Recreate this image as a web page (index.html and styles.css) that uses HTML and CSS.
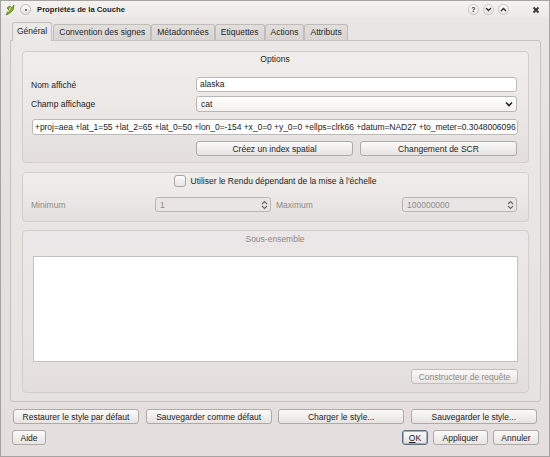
FILE: index.html
```html
<!DOCTYPE html>
<html lang="fr">
<head>
<meta charset="utf-8">
<title>Propriétés de la Couche</title>
<link rel="stylesheet" href="styles.css">
</head>
<body>
<div class="window">
  <div class="titlebar">
    <span class="appicon">
      <svg width="10" height="12" viewBox="0 0 10 12">
        <path d="M1 11 L4 6 L2 4 L5 2 L7 4 L9 1 L8 6 L5 9 Z" fill="#7cae3a" stroke="#4d7a1c" stroke-width="0.8"/>
        <path d="M3 8 L6 3" stroke="#e8d44a" stroke-width="1.2"/>
      </svg>
    </span>
    <span class="menubtn"><span class="dot"></span></span>
    <span class="title">Propriétés de la Couche</span>
    <span class="tb-right">
      <span class="tbtn">?</span>
      <span class="tbtn"><svg width="7" height="5" viewBox="0 0 7 5"><path d="M1 1 L3.5 3.5 L6 1" fill="none" stroke="#333" stroke-width="1.4"/></svg></span>
      <span class="tbtn"><svg width="7" height="5" viewBox="0 0 7 5"><path d="M1 4 L3.5 1.5 L6 4" fill="none" stroke="#333" stroke-width="1.4"/></svg></span>
      <span class="tclose"><svg width="8" height="8" viewBox="0 0 8 8"><path d="M1.5 1.5 L6.5 6.5 M6.5 1.5 L1.5 6.5" stroke="#333" stroke-width="1.8"/></svg></span>
    </span>
  </div>

  <div class="content">
    <div class="tabs">
      <span class="tab active">Général</span>
      <span class="tab">Convention des signes</span>
      <span class="tab">Métadonnées</span>
      <span class="tab">Etiquettes</span>
      <span class="tab">Actions</span>
      <span class="tab">Attributs</span>
    </div>

    <div class="panel">
      <div class="group options">
        <div class="gtitle">Options</div>
        <div class="formgrid">
          <span class="label">Nom affiché</span>
          <div class="input">alaska</div>
          <span class="label">Champ affichage</span>
          <div class="select">cat
            <svg class="chev" width="8" height="6" viewBox="0 0 8 6"><path d="M1 1.5 L4 4.5 L7 1.5" fill="none" stroke="#222" stroke-width="1.6"/></svg>
          </div>
        </div>
        <div class="input proj">+proj=aea +lat_1=55 +lat_2=65 +lat_0=50 +lon_0=-154 +x_0=0 +y_0=0 +ellps=clrk66 +datum=NAD27 +to_meter=0.3048006096</div>
        <div class="btnrow">
          <span class="btn">Créez un index spatial</span>
          <span class="btn">Changement de SCR</span>
        </div>
      </div>

      <div class="group scale">
        <div class="checkrow">
          <span class="checkbox"></span>
          <span>Utiliser le Rendu dépendant de la mise à l'échelle</span>
        </div>
        <div class="scalegrid">
          <span class="label dis">Minimum</span>
          <div class="spin">1<span class="arrows"><svg width="7" height="10" viewBox="0 0 7 10"><path d="M1 4 L3.5 1.5 L6 4 M1 6 L3.5 8.5 L6 6" fill="none" stroke="#666" stroke-width="1.1"/></svg></span></div>
          <span class="label dis maxlabel">Maximum</span>
          <div class="spin">100000000<span class="arrows"><svg width="7" height="10" viewBox="0 0 7 10"><path d="M1 4 L3.5 1.5 L6 4 M1 6 L3.5 8.5 L6 6" fill="none" stroke="#666" stroke-width="1.1"/></svg></span></div>
        </div>
      </div>

      <div class="group subset">
        <div class="gtitle dis">Sous-ensemble</div>
        <div class="textarea"></div>
        <div class="qrow"><span class="btn disabled">Constructeur de requête</span></div>
      </div>
    </div>

    <div class="row1">
      <span class="btn">Restaurer le style par défaut</span>
      <span class="btn">Sauvegarder comme défaut</span>
      <span class="btn">Charger le style...</span>
      <span class="btn">Sauvegarder le style...</span>
    </div>

    <div class="row2">
      <span class="btn aide">Aide</span>
      <span class="spacer"></span>
      <span class="btn ok"><u>O</u>K</span>
      <span class="btn appl">Appliquer</span>
      <span class="btn ann">Annuler</span>
    </div>
  </div>
</div>
</body>
</html>
```

FILE: styles.css
```css
* { box-sizing: border-box; }
html, body { margin: 0; padding: 0; }
body {
  width: 550px;
  height: 457px;
  font-family: "Liberation Sans", Arial, sans-serif;
  font-size: 8.5px;
  color: #232323;
  background: #e4e0de;
  overflow: hidden;
}
.window {
  width: 550px;
  height: 457px;
  border: 1px solid #a7a3a1;
  background: linear-gradient(to bottom, #e9e6e3 0%, #e6e1e0 40%, #e4dfde 100%);
  display: flex;
  flex-direction: column;
}

/* title bar */
.titlebar {
  height: 17px;
  display: flex;
  align-items: center;
  padding: 0 0 0 3px;
  background: linear-gradient(to bottom, #f3f2ef, #eceae6);
}
.appicon { width: 12px; height: 12px; display: flex; align-items: center; justify-content: center; }
.menubtn {
  width: 11px; height: 11px; border-radius: 50%;
  border: 1px solid #bdb9b5;
  background: linear-gradient(#fafaf8, #e6e4e0);
  margin-left: 4px;
  display: flex; align-items: center; justify-content: center;
}
.menubtn .dot { width: 2px; height: 2px; border-radius: 50%; background: #555; }
.title {
  font-weight: bold;
  font-size: 7.7px;
  margin-left: 6px;
  color: #1e1e1e;
}
.tb-right {
  margin-left: auto;
  display: flex;
  align-items: center;
  gap: 4px;
  padding-right: 8px;
}
.tbtn {
  width: 11px; height: 11px; border-radius: 50%;
  border: 1px solid #c9c6c2;
  background: linear-gradient(#fdfdfc, #e8e6e2);
  display: flex; align-items: center; justify-content: center;
  font-size: 7px; font-weight: bold; color: #333;
}
.tclose { margin-left: 17px; width: 11px; height: 11px; display: flex; align-items: center; justify-content: center; }

.content {
  flex: 1;
  display: flex;
  flex-direction: column;
  padding: 4px 8px 0 9px;
}

/* tabs */
.tabs {
  display: flex;
  height: 18px;
  padding-left: 2px;
  position: relative;
  z-index: 1;
  align-items: flex-end;
}
.tab {
  height: 16px;
  line-height: 15px;
  padding: 0 5px;
  border: 1px solid #c0bcb9;
  border-bottom: none;
  border-radius: 3px 3px 0 0;
  background: linear-gradient(#e2dedb, #d8d4d1);
  margin-right: 0;
  color: #262626;
  white-space: nowrap;
}
.tab.active {
  line-height: 17px;
  padding: 0 4px;
  background: #ebe9e6;
  border-color: #c4c0bd;
  margin-bottom: -1px;
  margin-right: 1px;
  height: 19px;
}

.panel {
  height: 362px;
  border: 1px solid #c6c2bf;
  border-radius: 0 3px 3px 3px;
  background: linear-gradient(to bottom, #eae8e5, #e6e2e0);
  padding: 10px 11px 0 11px;
  display: flex;
  flex-direction: column;
}

.group {
  border: 1px solid #d2cecb;
  border-radius: 4px;
  background: linear-gradient(to bottom, #f0eeeb 0%, #ebe8e6 50%, #e4dfde 100%);
  padding: 0 10px 0 9px;
}
.gtitle {
  text-align: center;
  height: 12px;
  line-height: 12px;
  margin-top: 1px;
}
.dis { color: #8e8a88; }

.options { height: 112px; }
.formgrid {
  display: grid;
  grid-template-columns: 164px 321px;
  grid-template-rows: 15px 16px;
  row-gap: 4px;
  margin-top: 12px;
  align-items: center;
}
.label { padding-left: 0; margin-left: -1px; }
.input {
  height: 15px;
  line-height: 13px;
  background: #ffffff;
  border: 1px solid #bdb9b6;
  border-radius: 3px;
  padding: 0 3px;
  white-space: nowrap;
  overflow: hidden;
  color: #1b1b1b;
}
.select {
  height: 16px;
  line-height: 14px;
  border: 1px solid #b9b5b2;
  border-radius: 3px;
  background: linear-gradient(#ffffff, #f2f0ee);
  padding: 0 4px;
  display: flex;
  align-items: center;
  justify-content: space-between;
}
.chev { margin-right: -1px; }
.proj {
  margin-top: 7px;
  height: 16px;
  line-height: 14px;
  padding-left: 2px;
  padding-right: 0;
  letter-spacing: -0.05px;
}
.btnrow {
  display: grid;
  grid-template-columns: 157px 157px;
  column-gap: 7px;
  margin-left: 164px;
  margin-top: 6px;
}
.btn {
  display: flex;
  align-items: center;
  justify-content: center;
  height: 15px;
  border: 1px solid #aeaaa7;
  border-radius: 3px;
  background: linear-gradient(to bottom, #fbfaf9 0%, #f1efed 50%, #e6e3e1 100%);
  color: #232323;
  white-space: nowrap;
}
.btn.disabled { color: #8e8a88; border-color: #c2bebb; }

.scale {
  height: 50px;
  margin-top: 9px;
}
.checkrow {
  display: flex;
  justify-content: center;
  align-items: center;
  gap: 5px;
  margin-top: 1px;
  height: 13px;
}
.checkbox {
  width: 12px; height: 12px;
  border: 1px solid #aaa6a3;
  border-radius: 3px;
  background: linear-gradient(#fbfbfa, #e8e5e3);
}
.scalegrid {
  display: grid;
  grid-template-columns: 123px 116px 131px 115px;
  align-items: center;
  margin-top: 10px;
}
.maxlabel { padding-left: 6px; }
.spin {
  height: 15px;
  border: 1px solid #b9b5b2;
  border-radius: 3px;
  background: #e9e5e4;
  color: #8e8a88;
  padding: 0 2px 0 4px;
  display: flex;
  align-items: center;
  justify-content: space-between;
}
.arrows { display: flex; align-items: center; }

.subset {
  height: 163px;
  margin-top: 8px;
  background: linear-gradient(to bottom, #ebe6e7 0%, #e9e5e4 60%, #e3dedd 100%);
}
.subset .gtitle { margin-top: 2px; }
.textarea {
  height: 106px;
  margin-top: 11px;
  margin-left: 1px;
  background: #ffffff;
  border: 1px solid #c6c2bf;
}
.qrow {
  display: flex;
  justify-content: flex-end;
  margin-top: 7px;
}
.qrow .btn { width: 107px; }

.row1 {
  display: grid;
  grid-template-columns: repeat(4, 126px);
  column-gap: 6.6px;
  margin-top: 7px;
  padding-left: 3px;
}
.row2 {
  display: flex;
  margin-top: 6px;
  padding-left: 2px;
  gap: 5px;
}
.spacer { flex: 1; }
.aide { width: 34px; }
.ok { width: 26px; border: 1px solid #5d6f80; box-shadow: inset 0 0 0 1px #9fb0c0; }
.appl { width: 55px; }
.ann { width: 46px; margin-right: 2px; }
u { text-decoration: underline; }
```
